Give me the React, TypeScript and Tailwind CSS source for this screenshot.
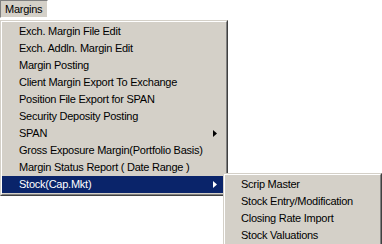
import React from "react";

const items = [
  "Exch. Margin File Edit",
  "Exch. Addln. Margin Edit",
  "Margin Posting",
  "Client Margin Export To Exchange",
  "Position File Export for SPAN",
  "Security Deposity Posting",
  "SPAN",
  "Gross Exposure Margin(Portfolio Basis)",
  "Margin Status Report ( Date Range )",
  "Stock(Cap.Mkt)",
];

const subItems = [
  "Scrip Master",
  "Stock Entry/Modification",
  "Closing Rate Import",
  "Stock Valuations",
];

function Arrow({ white }: { white?: boolean }) {
  return (
    <svg width="4" height="7" viewBox="0 0 4 7" className="absolute right-[9px] top-[5px]">
      <path d="M0 0 L4 3.5 L0 7 Z" fill={white ? "#ffffff" : "#000000"} />
    </svg>
  );
}

export default function App() {
  return (
    <div
      className="relative w-[382px] h-[244px] bg-white overflow-hidden text-[11px] tracking-[-0.25px] text-black"
      style={{ fontFamily: '"Liberation Sans", Arial, sans-serif' }}
    >
      <div className="h-[20px] flex items-start">
        <div className="h-[18px] w-[48px] bg-[#d4d0c8] border-t border-l border-t-[#808080] border-l-[#808080] border-r border-b border-r-white border-b-white flex items-center pl-[4px]">
          Margins
        </div>
      </div>
      <div className="w-[228px] bg-[#d4d0c8] border border-t-[#d4d0c8] border-l-[#d4d0c8] border-r-[#404040] border-b-[#404040]">
        <div className="border border-t-white border-l-white border-r-[#808080] border-b-[#808080] py-[1px]">
          {items.map((t, i) => {
            const active = i === items.length - 1;
            return (
              <div
                key={t}
                className={
                  "relative h-[17px] leading-[17px] pl-[17px] whitespace-nowrap " +
                  (active ? "bg-[#0a246a] text-white" : "")
                }
              >
                {t}
                {(t === "SPAN" || active) && <Arrow white={active} />}
              </div>
            );
          })}
        </div>
      </div>
      <div className="absolute left-[223px] top-[173px] w-[159px] bg-[#d4d0c8] border border-t-[#d4d0c8] border-l-[#d4d0c8] border-r-[#404040] border-b-[#404040]">
        <div className="border border-t-white border-l-white border-r-[#808080] border-b-[#808080] py-[1px]">
          {subItems.map((t) => (
            <div key={t} className="h-[17px] leading-[17px] pl-[16px] whitespace-nowrap">
              {t}
            </div>
          ))}
        </div>
      </div>
    </div>
  );
}
